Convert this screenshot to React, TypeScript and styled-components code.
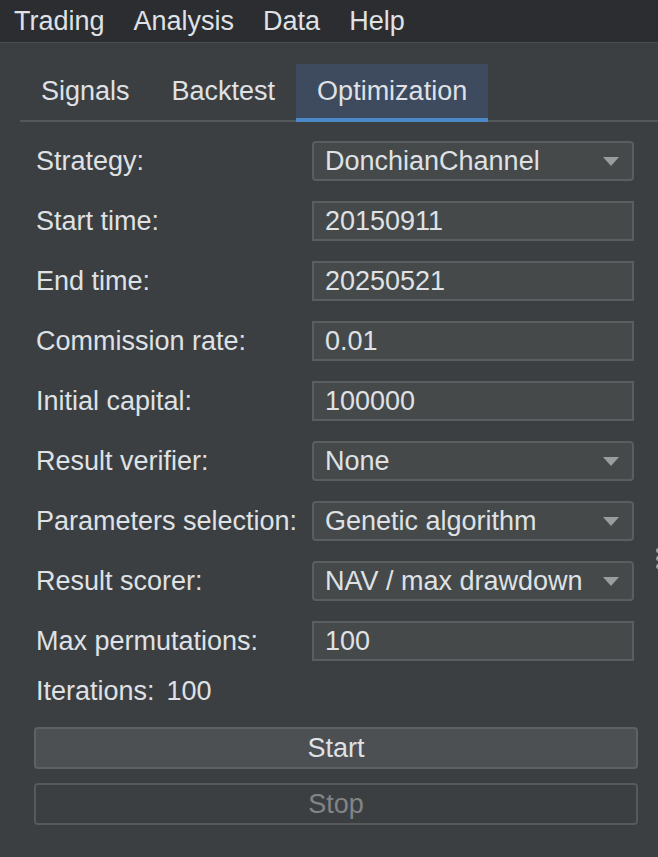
import React from "react";
import styled, { createGlobalStyle } from "styled-components";

const G = createGlobalStyle`
  html, body { margin: 0; padding: 0; background: #3c3f41; }
  body { font-family: "Liberation Sans", Arial, sans-serif; color: #dfe1e5; font-size: 27px; overflow: hidden; }
`;
const Page = styled.div`width: 658px; height: 857px; background: #3c3f41; display: flex; flex-direction: column;`;
const MenuBar = styled.div`height: 42px; background: #2b2d30; border-bottom: 1px solid #4a4d50; display: flex; align-items: center; padding-left: 14px; gap: 29px;`;
const MenuItem = styled.span`font-size: 27px; color: #dfe1e5;`;
const TabBar = styled.div`margin: 21px 0 0 20px; display: flex; border-bottom: 2px solid #55585b; height: 56px;`;
const Tab = styled.div<{ $active?: boolean }>`
  padding: 0 21px; display: flex; align-items: center; font-size: 27px;
  background: ${p => (p.$active ? "#3e4a5d" : "transparent")};
  border-bottom: 4px solid ${p => (p.$active ? "#4a88c7" : "transparent")};
  margin-bottom: -2px;
`;
const Form = styled.div`display: flex; flex-direction: column; gap: 20px; padding: 19px 25px 0 36px; position: relative;`;
const Row = styled.div`display: grid; grid-template-columns: 276px 322px; align-items: center; height: 40px;`;
const Label = styled.span`font-size: 27px; white-space: nowrap;`;
const Field = styled.div<{ $combo?: boolean }>`height: 40px; box-sizing: border-box; background: #45494a; border: 2px solid #5b5e60; border-radius: ${p => (p.$combo ? "4px" : "0")}; display: flex; align-items: center; justify-content: space-between; padding: 0 11px; font-size: 27px; white-space: nowrap;`;
const Arrow = styled.span`width: 0; height: 0; border-left: 8px solid transparent; border-right: 8px solid transparent; border-top: 9px solid #9a9c9e; margin-right: 2px;`;
const Iter = styled.div`font-size: 27px; height: 30px; margin-top: -5px; display: flex; gap: 12px;`;
const Buttons = styled.div`display: flex; flex-direction: column; gap: 14px; padding: 21px 20px 0 34px;`;
const Button = styled.div<{ $disabled?: boolean }>`
  height: 42px; box-sizing: border-box; border-radius: 4px; display: flex; align-items: center; justify-content: center; font-size: 27px;
  background: ${p => (p.$disabled ? "#3c3f41" : "#4c5052")};
  border: 2px solid ${p => (p.$disabled ? "#57595b" : "#5e6163")};
  color: ${p => (p.$disabled ? "#828486" : "#dfe1e5")};
`;
const Dots = styled.div`position: absolute; right: -3px; top: 426px; display: flex; flex-direction: column; gap: 3px;
  span { width: 5px; height: 5px; border-radius: 50%; background: #a0a2a4; }`;

const rows: [string, string, boolean][] = [
  ["Strategy:", "DonchianChannel", true],
  ["Start time:", "20150911", false],
  ["End time:", "20250521", false],
  ["Commission rate:", "0.01", false],
  ["Initial capital:", "100000", false],
  ["Result verifier:", "None", true],
  ["Parameters selection:", "Genetic algorithm", true],
  ["Result scorer:", "NAV / max drawdown", true],
  ["Max permutations:", "100", false],
];

export default function App() {
  return (
    <Page>
      <G />
      <MenuBar>
        {["Trading", "Analysis", "Data", "Help"].map(m => <MenuItem key={m}>{m}</MenuItem>)}
      </MenuBar>
      <TabBar>
        <Tab>Signals</Tab>
        <Tab>Backtest</Tab>
        <Tab $active>Optimization</Tab>
      </TabBar>
      <Form>
        {rows.map(([l, v, c]) => (
          <Row key={l}>
            <Label>{l}</Label>
            <Field $combo={c}>{v}{c && <Arrow />}</Field>
          </Row>
        ))}
        <Iter><span>Iterations:</span><span>100</span></Iter>
        <Dots><span /><span /><span /></Dots>
      </Form>
      <Buttons>
        <Button>Start</Button>
        <Button $disabled>Stop</Button>
      </Buttons>
    </Page>
  );
}
